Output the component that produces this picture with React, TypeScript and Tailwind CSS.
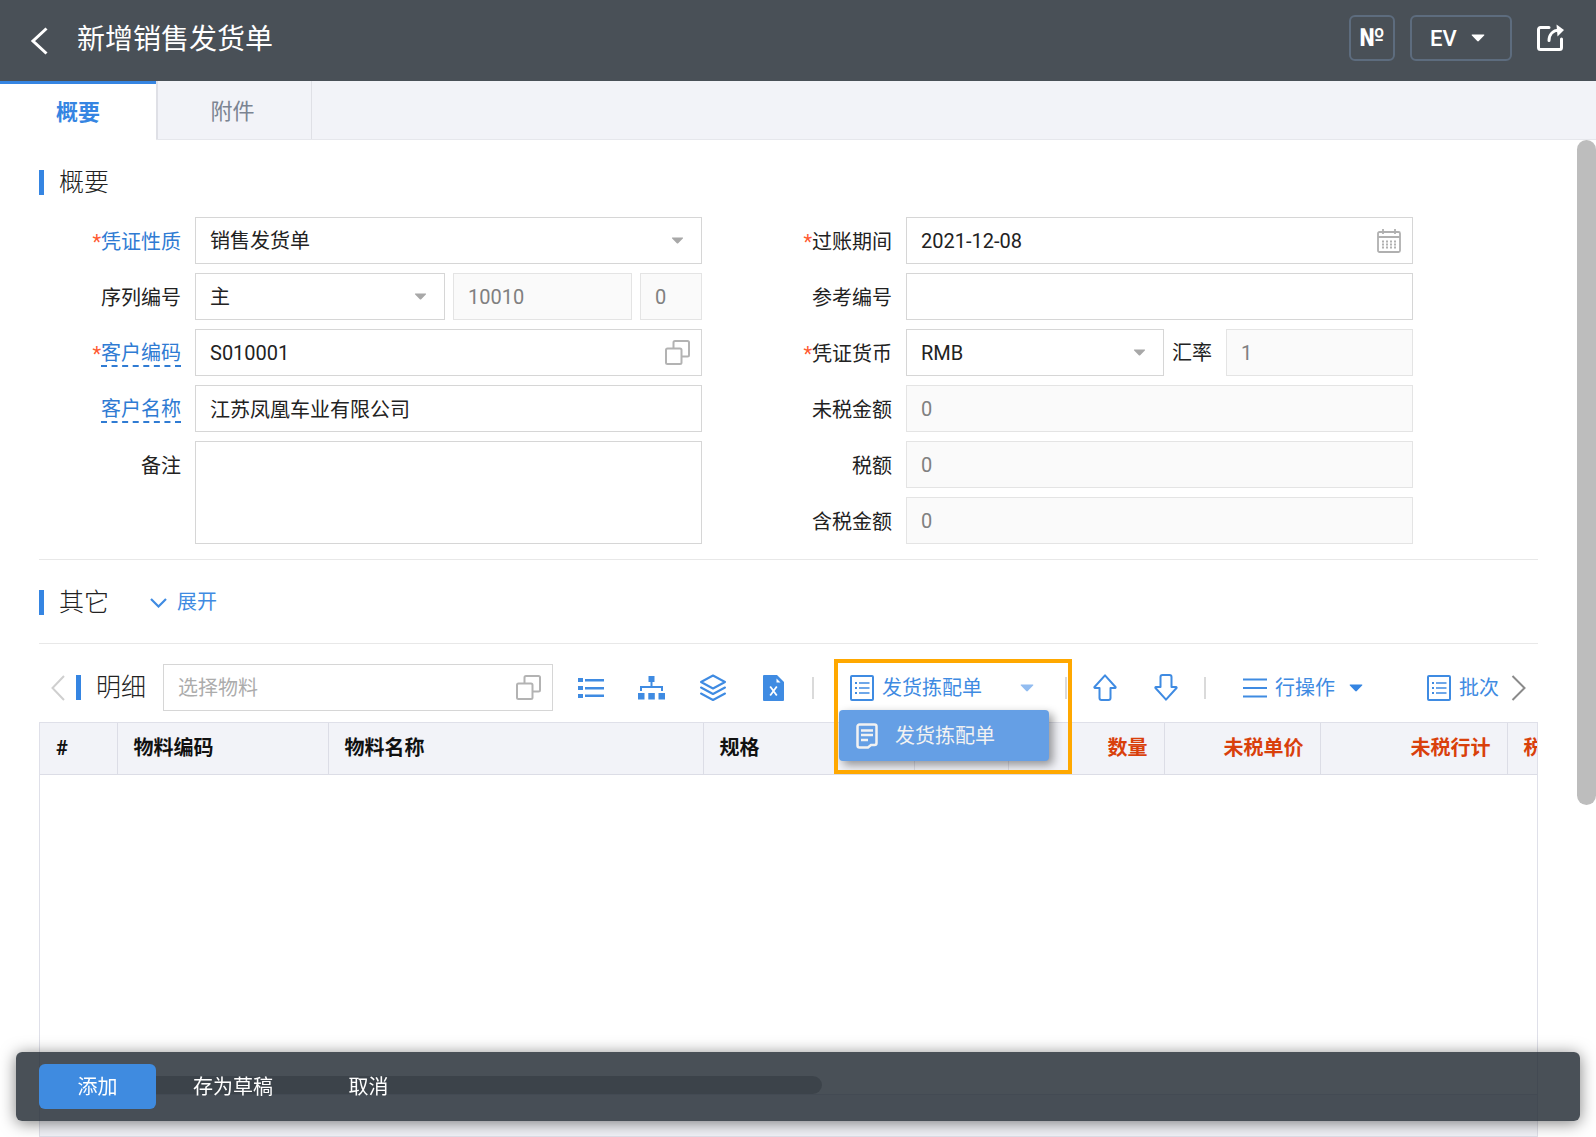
import { useState } from 'react';
import type { ReactNode } from 'react';

interface Column {
  title: string;
  width: string;
  numeric?: boolean;
}

const columns: Column[] = [
  { title: '#', width: 'w-[77px]' },
  { title: '物料编码', width: 'w-[211px]' },
  { title: '物料名称', width: 'w-[375px]' },
  { title: '规格', width: 'w-[211px]' },
  { title: '', width: 'w-[94px]' },
  { title: '数量', width: 'w-[156px]', numeric: true },
  { title: '未税单价', width: 'w-[156px]', numeric: true },
  { title: '未税行计', width: 'w-[187px]', numeric: true },
];

const control = 'h-[47px] w-full min-w-0 border px-[14px] text-[20px] outline-none';
const editable = 'border-[#d6d6d6] bg-white text-[#222]';
const readonlyBox = 'border-[#e4e4e4] bg-[#fafafa] text-[#808080]';

/* Icons */
function Caret({ className }: { className: string }) {
  return (
    <svg className={className} viewBox="0 0 14 8" fill="currentColor">
      <path d="M1.4.5h11.2c.7 0 1 .6.5 1.1L7.8 7.1c-.4.5-1.1.5-1.6 0L.9 1.6C.4 1.100.7.5 1.400.5z" />
    </svg>
  );
}

function CopyIcon() {
  return (
    <svg className="w-[25px] h-[25px]" viewBox="0 0 25 25" fill="none" stroke="#b3b3b3" strokeWidth="2">
      <rect x="1" y="8.500" width="15.500" height="15.500" rx="1.500" />
      <path d="M8.500 8V2.500A1.500 1.500 0 0 1 10 1h12.500A1.500 1.500 0 0 1 24 2.500v12.500a1.500 1.500 0 0 1-1.500 1.500H17" />
    </svg>
  );
}

function CalendarIcon() {
  return (
    <svg className="w-[24px] h-[24px]" viewBox="0 0 24 24" fill="none" stroke="#b0b0b0" strokeWidth="1.800">
      <rect x="1" y="3" width="22" height="20" rx="1.500" />
      <path d="M1 8h22M6 0v5M18 0v5" />
      <path d="M5 12.500h14M5 15.500h14M5 18.500h14" strokeDasharray="2 2" />
    </svg>
  );
}

function ListIcon() {
  return (
    <svg className="w-[26px] h-[22px]" viewBox="0 0 26 22" fill="currentColor">
      <path d="M0 1h5v4H0zM0 9h5v4H0zM0 17h5v4H0z" />
      <path d="M7 2h19v2.500H7zM7 10h19v2.500H7zM7 17.500h19V20H7z" />
    </svg>
  );
}

function TreeIcon() {
  return (
    <svg className="w-[27px] h-[24px]" viewBox="0 0 27 24" fill="currentColor">
      <path d="M10.500 0h6v6h-6zM0 17h6.500v6.500H0zM10.300 17h6.500v6.500h-6.500zM20.500 17H27v6.500h-6.500z" />
      <path d="M13.500 6v5M3 15v-4h21v4" fill="none" stroke="currentColor" strokeWidth="2" />
    </svg>
  );
}

function LayersIcon() {
  return (
    <svg className="w-[28px] h-[28px]" viewBox="0 0 28 28" fill="none" stroke="currentColor" strokeWidth="2" strokeLinejoin="round" strokeLinecap="round">
      <path d="M14 1.500 26 8l-12 6.500L2 8z" />
      <path d="m2 13.500 12 6.500 12-6.500M2 19.500 14 26l12-6.500" />
    </svg>
  );
}

function ExcelIcon() {
  return (
    <svg className="w-[21px] h-[26px]" viewBox="0 0 21 26">
      <path fill="currentColor" d="M1 0h13l7 7v18a1 1 0 0 1-1 1H1a1 1 0 0 1-1-1V1a1 1 0 0 1 1-1z" />
      <path fill="#fff" d="M13.500 3.500 17.500 7.500h-4z" />
      <path d="m7.200 11.500 6.600 9M13.800 11.500l-6.600 9" stroke="#fff" strokeWidth="1.800" />
    </svg>
  );
}

function SheetIcon() {
  return (
    <svg className="w-[24px] h-[26px] shrink-0" viewBox="0 0 24 26" fill="none" stroke="currentColor" strokeWidth="2">
      <rect x="1" y="1" width="22" height="24" rx="1" />
      <path d="M9 8h10.500M9 13h10.500M9 18h10.500" strokeWidth="1.600" />
      <path d="M5 8h2M5 13h2M5 18h2" />
    </svg>
  );
}

function NoteIcon() {
  return (
    <svg className="w-[22px] h-[26px]" viewBox="0 0 22 26" fill="none" stroke="currentColor" strokeWidth="2.500">
      <path d="M3.500 1.500h15a2 2 0 0 1 2 2v16.500a2 2 0 0 1-2 2H15l-3 2.500H3.500a2 2 0 0 1-2-2v-19a2 2 0 0 1 2-2z" />
      <path d="M5 7.500h12M5 12h12M5 17h7" />
    </svg>
  );
}

function BlockArrow({ down }: { down?: boolean }) {
  return (
    <svg className={down ? 'w-[24px] h-[27px] rotate-180' : 'w-[24px] h-[27px]'} viewBox="0 0 24 27" fill="none" stroke="currentColor" strokeWidth="2" strokeLinejoin="round">
      <path d="M12 1.300 22.500 13a.6.6 0 0 1-.4 1H17.500v10a2 2 0 0 1-2 2h-7a2 2 0 0 1-2-2V14H2a.6.6 0 0 1-.5-1z" />
    </svg>
  );
}

function ShareIcon() {
  return (
    <svg className="w-[28px] h-[28px]" viewBox="0 0 28 28" fill="none" stroke="#fff" strokeWidth="3" strokeLinecap="round">
      <path d="M13 3.500H4.500A2 2 0 0 0 2.500 5.500v18a2 2 0 0 0 2 2h19a2 2 0 0 0 2-2V15" />
      <path d="M13 16.500C13 10.500 17 6.500 23 6" />
      <path d="M20.500.5 28 6l-6.500 6.500z" fill="#fff" stroke="none" />
    </svg>
  );
}

function SectionTitle({ children }: { children: ReactNode }) {
  return (
    <h2 className="h-[25px] border-l-[5px] border-[#3585e2] pl-[15px] text-[25px] leading-[25px] font-light text-[#222] whitespace-nowrap">
      {children}
    </h2>
  );
}

interface FieldProps {
  id: string;
  label: string;
  required?: boolean;
  link?: 'plain' | 'dashed';
  children: ReactNode;
}

function Field({ id, label, required, link, children }: FieldProps) {
  return (
    <div className="flex gap-[14px]">
      <label htmlFor={id} className="flex w-[142px] h-[47px] pt-[2px] shrink-0 items-center justify-end text-[20px] leading-[24px] text-[#222]">
        {required && <span className="text-[#ff5a32]">*</span>}
        {link ? (
          <a
            href="#"
            className={link === 'dashed' ? 'text-[#2f7bd3] border-b-2 border-dashed border-[#2f7bd3]' : 'text-[#2f7bd3]'}
          >
            {label}
          </a>
        ) : (
          label
        )}
      </label>
      <div className="flex flex-1 min-w-0">{children}</div>
    </div>
  );
}

function Select({ id, value, label }: { id: string; value: string; label?: string }) {
  return (
    <div className="relative flex-1 min-w-0">
      <select id={id} aria-label={label} className={`${control} ${editable} appearance-none`}>
        <option>{value}</option>
      </select>
      <Caret className="absolute right-[18px] top-[20px] w-[13px] h-[7px] text-[#a8a8a8] pointer-events-none" />
    </div>
  );
}

function ReadOnly({ id, value, label }: { id: string; value: string; label?: string }) {
  return <input id={id} aria-label={label} readOnly value={value} className={`${control} ${readonlyBox}`} />;
}

function Separator() {
  return <span className="w-[2px] h-[22px] bg-[#dadada] shrink-0" />;
}

export default function App() {
  const [customerCode, setCustomerCode] = useState('S010001');
  const [customerName, setCustomerName] = useState('江苏凤凰车业有限公司');
  const [date, setDate] = useState('2021-12-08');
  const [menuOpen, setMenuOpen] = useState(true);

  return (
    <div className="min-h-screen flex flex-col overflow-hidden bg-white font-[Roboto,'Noto_Sans_CJK_SC',sans-serif]">
      {/* Header */}
      <header className="h-[81px] flex items-center bg-[#495057] pl-[30px] pr-[32px] pb-[5px] text-white">
        <button aria-label="返回" className="pt-[5px]">
          <svg className="w-[18px] h-[28px]" viewBox="0 0 18 28" fill="none" stroke="#fff" strokeWidth="3">
            <path d="M16.500 1.500 3 14l13.500 12.500" />
          </svg>
        </button>
        <h1 className="ml-[29px] pt-1 text-[28px] leading-[36px]">新增销售发货单</h1>
        <button className="ml-auto w-[46px] h-[46px] border-2 border-[#5d6c7e] rounded-md text-[25px] leading-[40px] font-bold">№</button>
        <button className="ml-[15px] w-[102px] h-[46px] flex items-center pl-[18px] gap-[14px] border-2 border-[#5d6c7e] rounded-md text-[22px] font-medium">
          EV
          <Caret className="w-[14px] h-[8px]" />
        </button>
        <button aria-label="分享" className="ml-[24px]">
          <ShareIcon />
        </button>
      </header>

      {/* Tabs */}
      <nav className="h-[59px] flex bg-[#f2f3f8] border-b border-[#e6e7ec]">
        <button className="w-[156px] h-[59px] bg-white border-t-[3px] border-[#3585e2] text-[22px] font-bold text-[#3585e2]">
          概要
        </button>
        <button className="w-[156px] pt-[3px] pr-[4px] border-r border-l-2 border-[#dfe0e6] text-[22px] text-[#7b8492]">附件</button>
      </nav>

      <div className="flex flex-1">
        <main className="flex flex-1 min-w-0 flex-col px-[39px] pt-[30px]">
          <SectionTitle>概要</SectionTitle>

          <form className="mt-[22px] mr-[125px] grid grid-cols-2 gap-12">
            <div className="flex flex-col gap-[9px]">
              <Field id="nature" label="凭证性质" required link="plain">
                <Select id="nature" value="销售发货单" />
              </Field>
              <Field id="series" label="序列编号">
                <div className="flex flex-1 min-w-0 gap-2">
                  <Select id="series" value="主" />
                  <div className="w-[179px]">
                    <ReadOnly id="seriesNo" label="编号" value="10010" />
                  </div>
                  <div className="w-[62px]">
                    <ReadOnly id="seriesSub" label="子编号" value="0" />
                  </div>
                </div>
              </Field>
              <Field id="customerCode" label="客户编码" required link="dashed">
                <div className="relative flex-1">
                  <input
                    id="customerCode"
                    value={customerCode}
                    onChange={e => setCustomerCode(e.target.value)}
                    className={`${control} ${editable}`}
                  />
                  <button type="button" aria-label="选择客户" className="absolute right-[12px] top-[11px]">
                    <CopyIcon />
                  </button>
                </div>
              </Field>
              <Field id="customerName" label="客户名称" link="dashed">
                <input
                  id="customerName"
                  value={customerName}
                  onChange={e => setCustomerName(e.target.value)}
                  className={`${control} ${editable}`}
                />
              </Field>
              <Field id="remark" label="备注">
                <textarea id="remark" className="h-[103px] w-full resize-none border border-[#d6d6d6] p-3 text-[20px] outline-none" />
              </Field>
            </div>

            <div className="flex flex-col gap-[9px]">
              <Field id="date" label="过账期间" required>
                <div className="relative flex-1">
                  <input id="date" value={date} onChange={e => setDate(e.target.value)} className={`${control} ${editable}`} />
                  <button type="button" aria-label="选择日期" className="absolute right-[12px] top-[12px]">
                    <CalendarIcon />
                  </button>
                </div>
              </Field>
              <Field id="reference" label="参考编号">
                <input id="reference" className={`${control} ${editable}`} />
              </Field>
              <Field id="currency" label="凭证货币" required>
                <div className="flex flex-1 min-w-0 items-center">
                  <Select id="currency" value="RMB" />
                  <label htmlFor="rate" className="ml-2 mr-[14px] text-[20px] text-[#222]">
                    汇率
                  </label>
                  <div className="w-[187px]">
                    <ReadOnly id="rate" value="1" />
                  </div>
                </div>
              </Field>
              <Field id="net" label="未税金额">
                <ReadOnly id="net" value="0" />
              </Field>
              <Field id="tax" label="税额">
                <ReadOnly id="tax" value="0" />
              </Field>
              <Field id="gross" label="含税金额">
                <ReadOnly id="gross" value="0" />
              </Field>
            </div>
          </form>

          {/* Other */}
          <section className="mt-[15px] pt-[30px] pb-[28px] flex items-center border-y border-[#e8e8e8]">
            <SectionTitle>其它</SectionTitle>
            <button className="ml-[41px] h-[25px] flex items-center gap-[10px] text-[20px] leading-[25px] text-[#3f8be2]">
              <svg className="w-[17px] h-[10px]" viewBox="0 0 17 10" fill="none" stroke="currentColor" strokeWidth="2.200">
                <path d="m1 1 7.500 7.500L16 1" />
              </svg>
              展开
            </button>
          </section>

          {/* Toolbar */}
          <div className="mt-[20px] mb-[11px] h-[47px] flex items-center pl-[12px] pr-[12px] text-[20px] text-[#3f8be2] whitespace-nowrap">
            <button aria-label="向左" className="mr-[11px]">
              <svg className="w-[14px] h-[26px]" viewBox="0 0 14 26" fill="none" stroke="#cfcfcf" strokeWidth="2">
                <path d="M13 1 1.500 13 13 25" />
              </svg>
            </button>
            <SectionTitle>明细</SectionTitle>
            <div className="relative ml-[17px] w-[390px]">
              <input aria-label="选择物料" placeholder="选择物料" className={`${control} ${editable} placeholder:text-[#acacac]`} />
              <button aria-label="打开物料" className="absolute right-[12px] top-[11px]">
                <CopyIcon />
              </button>
            </div>
            <div className="ml-[7px] mr-2 flex">
              <button aria-label="列表" className="w-[61px] h-[47px] flex items-center justify-center">
                <ListIcon />
              </button>
              <button aria-label="层级" className="w-[61px] h-[47px] flex items-center justify-center">
                <TreeIcon />
              </button>
              <button aria-label="图层" className="w-[61px] h-[47px] flex items-center justify-center">
                <LayersIcon />
              </button>
              <button aria-label="导出" className="w-[61px] h-[47px] flex items-center justify-center">
                <ExcelIcon />
              </button>
            </div>
            <Separator />

            <div className="relative ml-[20px] w-[238px] h-[47px] flex items-center">
              <button onClick={() => setMenuOpen(!menuOpen)} className="ml-4 w-[184px] flex items-center gap-2">
                <SheetIcon />
                发货拣配单
                <Caret className="ml-auto w-[14px] h-[8px] text-[#92bcf0]" />
              </button>
              <span className="ml-auto mr-[5px] flex">
                <Separator />
              </span>
              {menuOpen && (
                <div className="absolute z-10 left-[5px] top-[46px] w-[210px] rounded bg-[#659fe5] shadow-[4px_4px_10px_rgba(0,0,0,0.4)]">
                  <button className="h-[51px] flex items-center gap-[17px] pl-[17px] text-[20px] text-[#f2f2f2]">
                    <NoteIcon />
                    发货拣配单
                  </button>
                </div>
              )}
              <div className="absolute z-20 left-0 -top-[5px] w-[238px] h-[115px] border-4 border-[#ffa800] pointer-events-none" />
            </div>

            <div className="ml-[2px] mr-[8px] flex">
              <button aria-label="上移" className="w-[61px] h-[47px] flex items-center justify-center">
                <BlockArrow />
              </button>
              <button aria-label="下移" className="w-[61px] h-[47px] flex items-center justify-center">
                <BlockArrow down />
              </button>
            </div>
            <Separator />
            <button className="ml-[37px] flex items-center gap-2">
              <svg className="w-[24px] h-[20px]" viewBox="0 0 24 20" stroke="currentColor" strokeWidth="2">
                <path d="M0 1.500h24M0 10h24M0 18.500h24" />
              </svg>
              行操作
              <Caret className="ml-[6px] w-[14px] h-[8px] text-[#3585e2]" />
            </button>
            <button className="ml-auto flex items-center gap-2">
              <SheetIcon />
              批次
            </button>
            <button aria-label="向右" className="ml-[12px]">
              <svg className="w-[15px] h-[26px]" viewBox="0 0 15 26" fill="none" stroke="#8a8a8a" strokeWidth="2">
                <path d="m1.500 1 12 12-12 12" />
              </svg>
            </button>
          </div>

          {/* Detail table */}
          <div className="flex flex-1 flex-col overflow-hidden border border-[#dfe0e9]">
            <table className="w-full table-fixed border-collapse text-[20px]">
              <thead>
                <tr className="h-[51px] bg-[#f2f3f8]">
                  {columns.map((col, i) => (
                    <th
                      key={i}
                      className={`${col.width} px-4 border-r border-b border-[#dcdde6] font-bold ${
                        col.numeric ? 'text-right text-[#d9400b]' : 'text-left text-[#111]'
                      }`}
                    >
                      {col.title}
                    </th>
                  ))}
                  <th className="overflow-hidden pl-4 border-b border-[#dcdde6] text-left font-bold text-[#d9400b] whitespace-nowrap">税</th>
                </tr>
              </thead>
            </table>
            <div className="flex-1 min-h-[300px]" />
            <div className="h-[18px]">
              <div className="h-full w-[782px] rounded-r-full bg-[#bfbfbf]" />
            </div>
            <div className="h-[42px] border-t border-[#dfe0e9] bg-[#f2f3f8]" />
          </div>
        </main>

        {/* Page scrollbar */}
        <div className="w-[19px] shrink-0">
          <div className="h-2/3 rounded-full bg-[#bdbdbd]" />
        </div>
      </div>

      {/* Bottom actions */}
      <footer className="fixed z-30 inset-x-4 bottom-4 h-[69px] flex items-center rounded-md bg-[#1b242d]/80 pl-[23px] text-[20px] text-white shadow-[0_2px_16px_rgba(0,0,0,0.5)]">
        <button className="w-[117px] h-[45px] rounded-md bg-[#3f8be0]">添加</button>
        <button className="w-[154px] h-[45px]">存为草稿</button>
        <button className="w-[117px] h-[45px]">取消</button>
      </footer>
    </div>
  );
}
